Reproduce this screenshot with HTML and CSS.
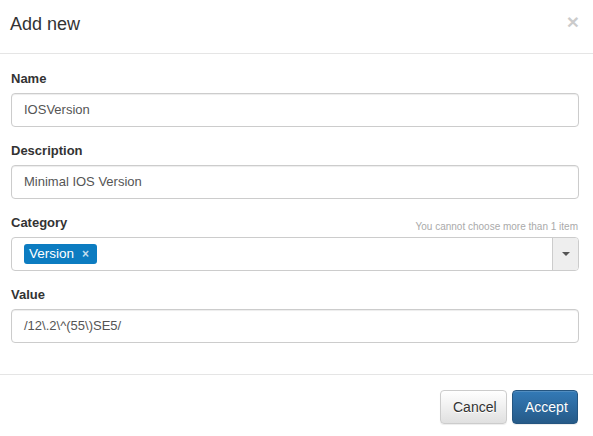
FILE: index.html
```html
<!DOCTYPE html>
<html>
<head>
<meta charset="utf-8">
<link rel="stylesheet" href="styles.css">
</head>
<body>
<div class="modal">
  <div class="modal-header">
    <h4 class="modal-title">Add new</h4>
    <span class="close">&times;</span>
  </div>
  <div class="modal-body">
    <div class="form-group">
      <div class="label-row"><label>Name</label></div>
      <div class="form-control">IOSVersion</div>
    </div>
    <div class="form-group">
      <div class="label-row"><label>Description</label></div>
      <div class="form-control">Minimal IOS Version</div>
    </div>
    <div class="form-group">
      <div class="label-row">
        <label>Category</label>
        <span class="hint">You cannot choose more than 1 item</span>
      </div>
      <div class="select">
        <div class="select-choices">
          <span class="tag">Version<span class="tag-x">&times;</span></span>
        </div>
        <div class="select-toggle"><span class="caret"></span></div>
      </div>
    </div>
    <div class="form-group">
      <div class="label-row"><label>Value</label></div>
      <div class="form-control">/12\.2\^(55\)SE5/</div>
    </div>
  </div>
  <div class="modal-footer">
    <button class="btn btn-default">Cancel</button>
    <button class="btn btn-primary">Accept</button>
  </div>
</div>
</body>
</html>
```

FILE: styles.css
```css
html, body {
  margin: 0;
  padding: 0;
  background: #fff;
}
body {
  font-family: "Liberation Sans", Arial, sans-serif;
  color: #333;
  font-size: 14px;
}
.modal {
  width: 593px;
}
.modal-header {
  display: flex;
  justify-content: space-between;
  align-items: flex-start;
  height: 26px;
  padding: 11px 14px 16px 10px;
  border-bottom: 1px solid #e5e5e5;
}
.modal-title {
  margin: 0;
  font-size: 18px;
  font-weight: normal;
  line-height: 26px;
  color: #333;
}
.close {
  font-size: 21px;
  font-weight: bold;
  line-height: 21px;
  color: #000;
  opacity: 0.2;
}
.modal-body {
  padding: 16px 14px 16px 11px;
}
.form-group {
  margin-bottom: 15px;
}
.label-row {
  display: flex;
  justify-content: space-between;
  height: 18px;
  margin-bottom: 5px;
}
label {
  font-size: 13px;
  font-weight: bold;
  line-height: 18px;
  color: #333;
}
.hint {
  align-self: flex-end;
  font-size: 10px;
  line-height: 10px;
  color: #aaa;
  margin-right: 1px;
}
.form-control {
  box-sizing: border-box;
  height: 34px;
  padding: 0 12px;
  border: 1px solid #ccc;
  border-radius: 4px;
  font-size: 13px;
  line-height: 32px;
  color: #555;
  box-shadow: inset 0 1px 1px rgba(0,0,0,0.075);
}
.select {
  box-sizing: border-box;
  display: flex;
  height: 34px;
  border: 1px solid #ccc;
  border-radius: 4px;
}
.select-choices {
  flex: 1;
  display: flex;
  align-items: center;
  padding: 0 12px;
}
.tag {
  display: inline-flex;
  align-items: center;
  height: 20px;
  padding: 0 8px 0 5px;
  background: #0c7cc1;
  border-radius: 3px;
  color: #fff;
  font-size: 13.5px;
  line-height: 20px;
}
.tag-x {
  margin-left: 8px;
  font-size: 12px;
  font-weight: bold;
  color: rgba(255,255,255,0.75);
}
.select-toggle {
  width: 25px;
  display: flex;
  align-items: center;
  justify-content: center;
  background: #eee;
  border-left: 1px solid #ccc;
  border-radius: 0 3px 3px 0;
}
.caret {
  width: 0;
  height: 0;
  border-top: 4px solid #555;
  border-left: 4px solid transparent;
  border-right: 4px solid transparent;
}
.modal-footer {
  display: flex;
  justify-content: flex-end;
  gap: 5px;
  padding: 15px 15px 15px 15px;
  border-top: 1px solid #e5e5e5;
}
.btn {
  box-sizing: border-box;
  height: 34px;
  padding: 0 12px;
  font-family: "Liberation Sans", Arial, sans-serif;
  font-size: 14px;
  line-height: 32px;
  border-radius: 4px;
  border: 1px solid;
}
.btn-default {
  width: 67px;
  color: #333;
  border-color: #ccc;
  background: linear-gradient(to bottom, #fff 0%, #e0e0e0 100%);
  text-shadow: 0 1px 0 #fff;
  box-shadow: inset 0 1px 0 rgba(255,255,255,.15), 0 1px 1px rgba(0,0,0,.075);
}
.btn-primary {
  width: 66px;
  color: #fff;
  border-color: #245580;
  background: linear-gradient(to bottom, #337ab7 0%, #265a88 100%);
  text-shadow: 0 -1px 0 rgba(0,0,0,.2);
  box-shadow: inset 0 1px 0 rgba(255,255,255,.15), 0 1px 1px rgba(0,0,0,.075);
}
```
